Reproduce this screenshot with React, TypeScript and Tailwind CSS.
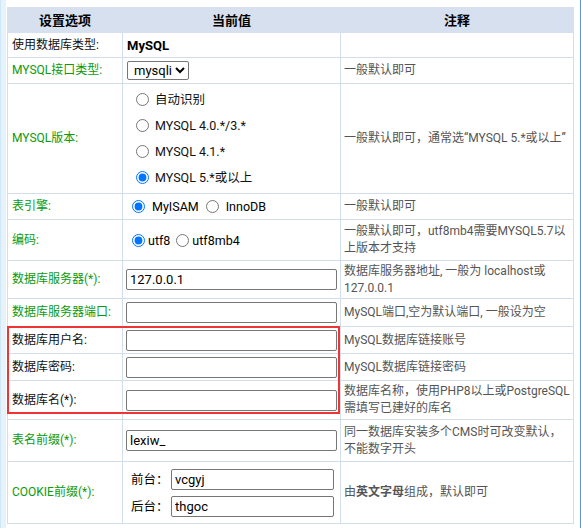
import React from 'react';

const font = { fontFamily: 'Roboto, "Noto Sans CJK SC", sans-serif' };

const Label = ({ children, green }: { children: React.ReactNode; green?: boolean }) => (
  <td className={`border border-[#d3deec] pl-[4px] pr-0 whitespace-nowrap text-[12px] ${green ? 'text-[#0c9a0c]' : 'text-[#111]'}`}>{children}</td>
);

const Note = ({ children }: { children: React.ReactNode }) => (
  <td className="border border-[#d3deec] pl-[3px] pr-[2px] text-[12px] text-[#555]">{children}</td>
);

const TextInput = ({ value, w = 'w-[211px]' }: { value?: string; w?: string }) => (
  <input
    type="text"
    defaultValue={value}
    className={`${w} h-[21px] block border border-[#767676] rounded-[2px] px-[3px] text-[13px] leading-[19px] text-black bg-white outline-none`}
    style={font}
  />
);

const Radio = ({ checked, name }: { checked?: boolean; name: string }) => (
  <input type="radio" name={name} defaultChecked={checked} className="w-[13px] h-[13px] m-0 accent-[#0075ff] shrink-0" />
);

export default function App() {
  return (
    <div className="w-[581px] h-[528px] bg-white flex text-[12.5px] leading-[17px]" style={font}>
      <div className="w-[6px] h-full bg-[#e6f3fb] border-l border-[#cfe7f8]" />
      <div className="relative pt-[7px] pl-[1px]">
        <table className="border-collapse table-fixed w-[566px]">
          <colgroup>
            <col className="w-[115px]" />
            <col className="w-[218px]" />
            <col className="w-[233px]" />
          </colgroup>
          <thead>
            <tr className="h-[25px] bg-[#d6e0ee] font-bold text-black text-[13px]">
              <th className="border border-[#d6e0ee] p-0">设置选项</th>
              <th className="border border-[#d6e0ee] p-0">当前值</th>
              <th className="border border-[#d6e0ee] p-0">注释</th>
            </tr>
          </thead>
          <tbody>
            <tr className="h-[25px]">
              <Label>使用数据库类型:</Label>
              <td className="border border-[#d3deec] pl-[4px] font-bold text-[13px]">MySQL</td>
              <Note> </Note>
            </tr>
            <tr className="h-[26px]">
              <Label green>MYSQL接口类型:</Label>
              <td className="border border-[#d3deec] pl-[4px]">
                <select className="block h-[19px] border border-[#767676] rounded-[2px] text-[13px] leading-[17px] py-0 pl-[2px] bg-white text-black" style={font} defaultValue="mysqli">
                  <option value="mysqli">mysqli</option>
                  <option value="mysql">mysql</option>
                </select>
              </td>
              <Note>一般默认即可</Note>
            </tr>
            <tr className="h-[110px]">
              <Label green>MYSQL版本:</Label>
              <td className="border border-[#d3deec] pl-[13px]">
                <div className="flex flex-col gap-[9px] text-[#111] text-[12.5px]">
                  <label className="flex items-center gap-[6px]"><Radio name="ver" />自动识别</label>
                  <label className="flex items-center gap-[6px]"><Radio name="ver" />MYSQL 4.0.*/3.*</label>
                  <label className="flex items-center gap-[6px]"><Radio name="ver" />MYSQL 4.1.*</label>
                  <label className="flex items-center gap-[6px]"><Radio name="ver" checked />MYSQL 5.*或以上</label>
                </div>
              </td>
              <Note>一般默认即可，通常选“MYSQL 5.*或以上”</Note>
            </tr>
            <tr className="h-[26px]">
              <Label green>表引擎:</Label>
              <td className="border border-[#d3deec] pl-[9px] text-[12.5px]">
                <div className="flex items-center">
                  <label className="flex items-center gap-[7px] mr-[7px]"><Radio name="eng" checked />MyISAM</label>
                  <label className="flex items-center gap-[7px]"><Radio name="eng" />InnoDB</label>
                </div>
              </td>
              <Note>一般默认即可</Note>
            </tr>
            <tr className="h-[41px]">
              <Label green>编码:</Label>
              <td className="border border-[#d3deec] pl-[9px] text-[12.5px]">
                <div className="flex items-center">
                  <label className="flex items-center gap-[3px] mr-[6px]"><Radio name="enc" checked />utf8</label>
                  <label className="flex items-center gap-[3px]"><Radio name="enc" />utf8mb4</label>
                </div>
              </td>
              <Note>一般默认即可，utf8mb4需要MYSQL5.7以上版本才支持</Note>
            </tr>
            <tr className="h-[38px]">
              <Label green>数据库服务器(*):</Label>
              <td className="border border-[#d3deec] pl-[3px]"><TextInput value="127.0.0.1" /></td>
              <Note>数据库服务器地址, 一般为 localhost或127.0.0.1</Note>
            </tr>
            <tr className="h-[28px]">
              <Label green>数据库服务器端口:</Label>
              <td className="border border-[#d3deec] pl-[3px]"><TextInput /></td>
              <Note>MySQL端口,空为默认端口, 一般设为空</Note>
            </tr>
            <tr className="h-[27px]">
              <Label>数据库用户名:</Label>
              <td className="border border-[#d3deec] pl-[3px]"><TextInput /></td>
              <Note>MySQL数据库链接账号</Note>
            </tr>
            <tr className="h-[27px]">
              <Label>数据库密码:</Label>
              <td className="border border-[#d3deec] pl-[3px]"><TextInput /></td>
              <Note>MySQL数据库链接密码</Note>
            </tr>
            <tr className="h-[39px]">
              <Label>数据库名(*):</Label>
              <td className="border border-[#d3deec] pl-[3px]"><TextInput /></td>
              <Note>数据库名称，使用PHP8以上或PostgreSQL需填写已建好的库名</Note>
            </tr>
            <tr className="h-[42px]">
              <Label green>表名前缀(*):</Label>
              <td className="border border-[#d3deec] pl-[3px]"><TextInput value="lexiw_" /></td>
              <Note>同一数据库安装多个CMS时可改变默认，不能数字开头</Note>
            </tr>
            <tr className="h-[62px]">
              <Label green>COOKIE前缀(*):</Label>
              <td className="border border-[#d3deec] pl-[8px]">
                <div className="flex flex-col gap-[6px]">
                  <div className="flex items-center"><span className="w-[40px] shrink-0 whitespace-nowrap text-[12.5px]">前台：</span><TextInput value="vcgyj" w="w-[163px]" /></div>
                  <div className="flex items-center"><span className="w-[40px] shrink-0 whitespace-nowrap text-[12.5px]">后台：</span><TextInput value="thgoc" w="w-[163px]" /></div>
                </div>
              </td>
              <Note>由<b>英文字母</b>组成，默认即可</Note>
            </tr>
          </tbody>
        </table>
        <div className="absolute left-[1px] top-[326px] w-[333px] h-[88px] border-2 border-[#ee3535] pointer-events-none" />
      </div>
      <div className="ml-auto w-px h-full bg-[#3ea2e6]" />
    </div>
  );
}
